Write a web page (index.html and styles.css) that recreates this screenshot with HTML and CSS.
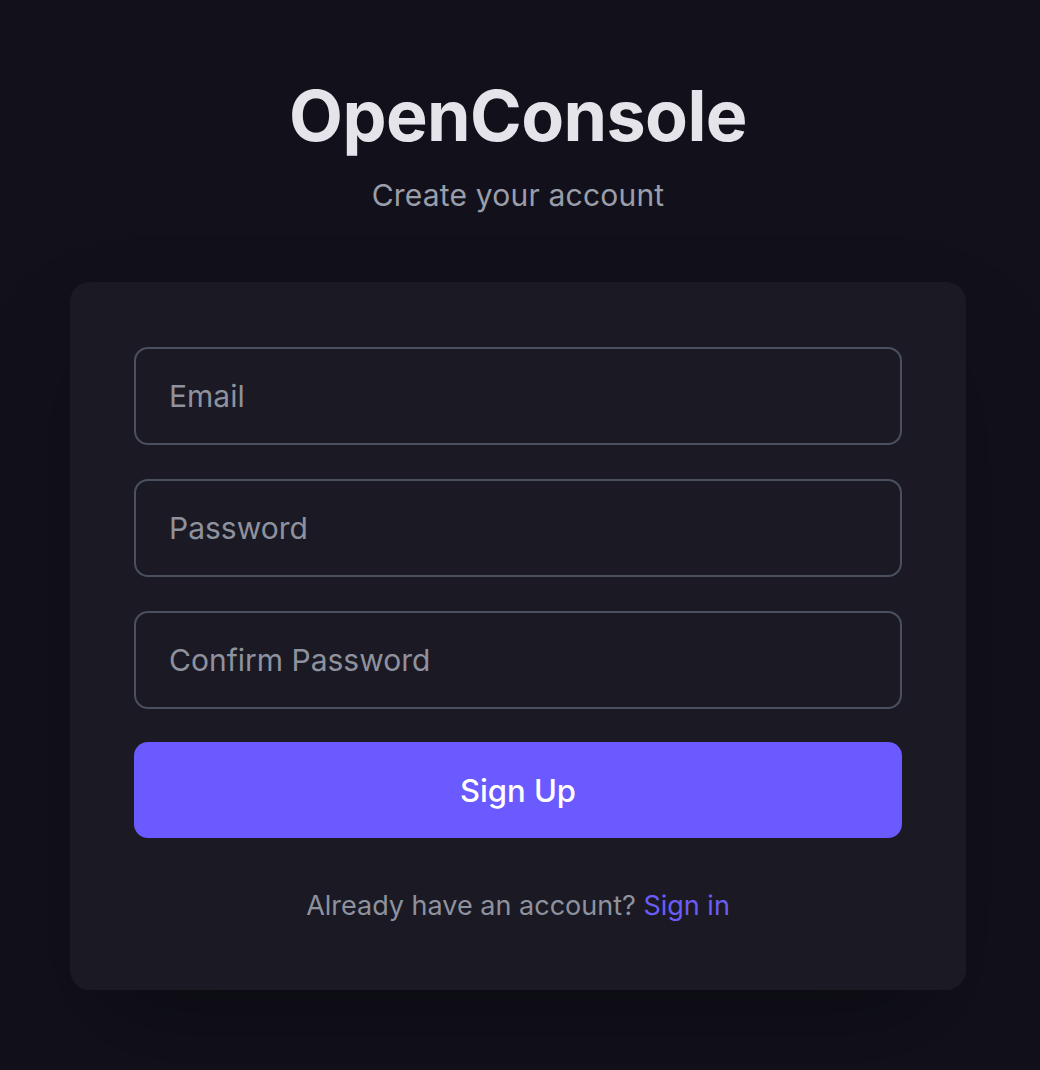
FILE: index.html
```html
<!DOCTYPE html>
<html lang="en">
<head>
<meta charset="utf-8">
<title>OpenConsole – Sign Up</title>
<link rel="stylesheet" href="styles.css">
</head>
<body>
<main class="page">
  <header class="brand">
    <h1 class="brand-title">OpenConsole</h1>
    <p class="brand-subtitle">Create your account</p>
  </header>
  <form class="card">
    <input class="field" type="email" placeholder="Email">
    <input class="field" type="password" placeholder="Password">
    <input class="field" type="password" placeholder="Confirm Password">
    <button class="submit" type="button">Sign Up</button>
    <p class="alt">Already have an account? <a class="alt-link" href="#">Sign in</a></p>
  </form>
</main>
</body>
</html>
```

FILE: styles.css
```css
html, body {
  margin: 0;
  padding: 0;
  background: #12111b;
  height: 100%;
}
body {
  font-family: Inter, "Noto Sans", "Liberation Sans", sans-serif;
  color: #e4e4ea;
}
.page {
  display: flex;
  flex-direction: column;
  align-items: center;
  padding: 80px 74px 0 70px;
}
.brand {
  display: flex;
  flex-direction: column;
  align-items: center;
}
.brand-title {
  margin: 0;
  font-size: 70px;
  line-height: 72px;
  font-weight: 700;
  color: #e4e4ea;
  letter-spacing: -0.6px;
}
.brand-subtitle {
  margin: 22px 0 0;
  font-size: 30px;
  line-height: 42px;
  color: #9a9eaa;
  letter-spacing: 0.2px;
}
.card {
  margin-top: 66px;
  width: 896px;
  box-sizing: border-box;
  padding: 65px 64px 64px;
  background: #1b1a24;
  border-radius: 20px;
  box-shadow: 0 50px 100px -24px rgba(0, 0, 0, 0.35);
  display: flex;
  flex-direction: column;
}
.field {
  box-sizing: border-box;
  height: 98px;
  margin: 0 0 34px;
  padding: 0 33px;
  background: transparent;
  border: 2px solid #4a505e;
  border-radius: 14px;
  font-family: inherit;
  font-size: 30px;
  color: #e4e4ea;
  outline: none;
}
.field::placeholder {
  color: #8e929e;
}
.field:nth-of-type(3) {
  margin-bottom: 33px;
}
.submit {
  height: 96px;
  border: 0;
  border-radius: 14px;
  background: #6a5aff;
  color: #ffffff;
  font-family: inherit;
  font-size: 31px;
  font-weight: 500;
}
.alt {
  margin: 48px 0 0;
  text-align: center;
  font-size: 27px;
  line-height: 40px;
  color: #8e929e;
}
.alt-link {
  color: #6b5cf6;
  text-decoration: none;
}
```
